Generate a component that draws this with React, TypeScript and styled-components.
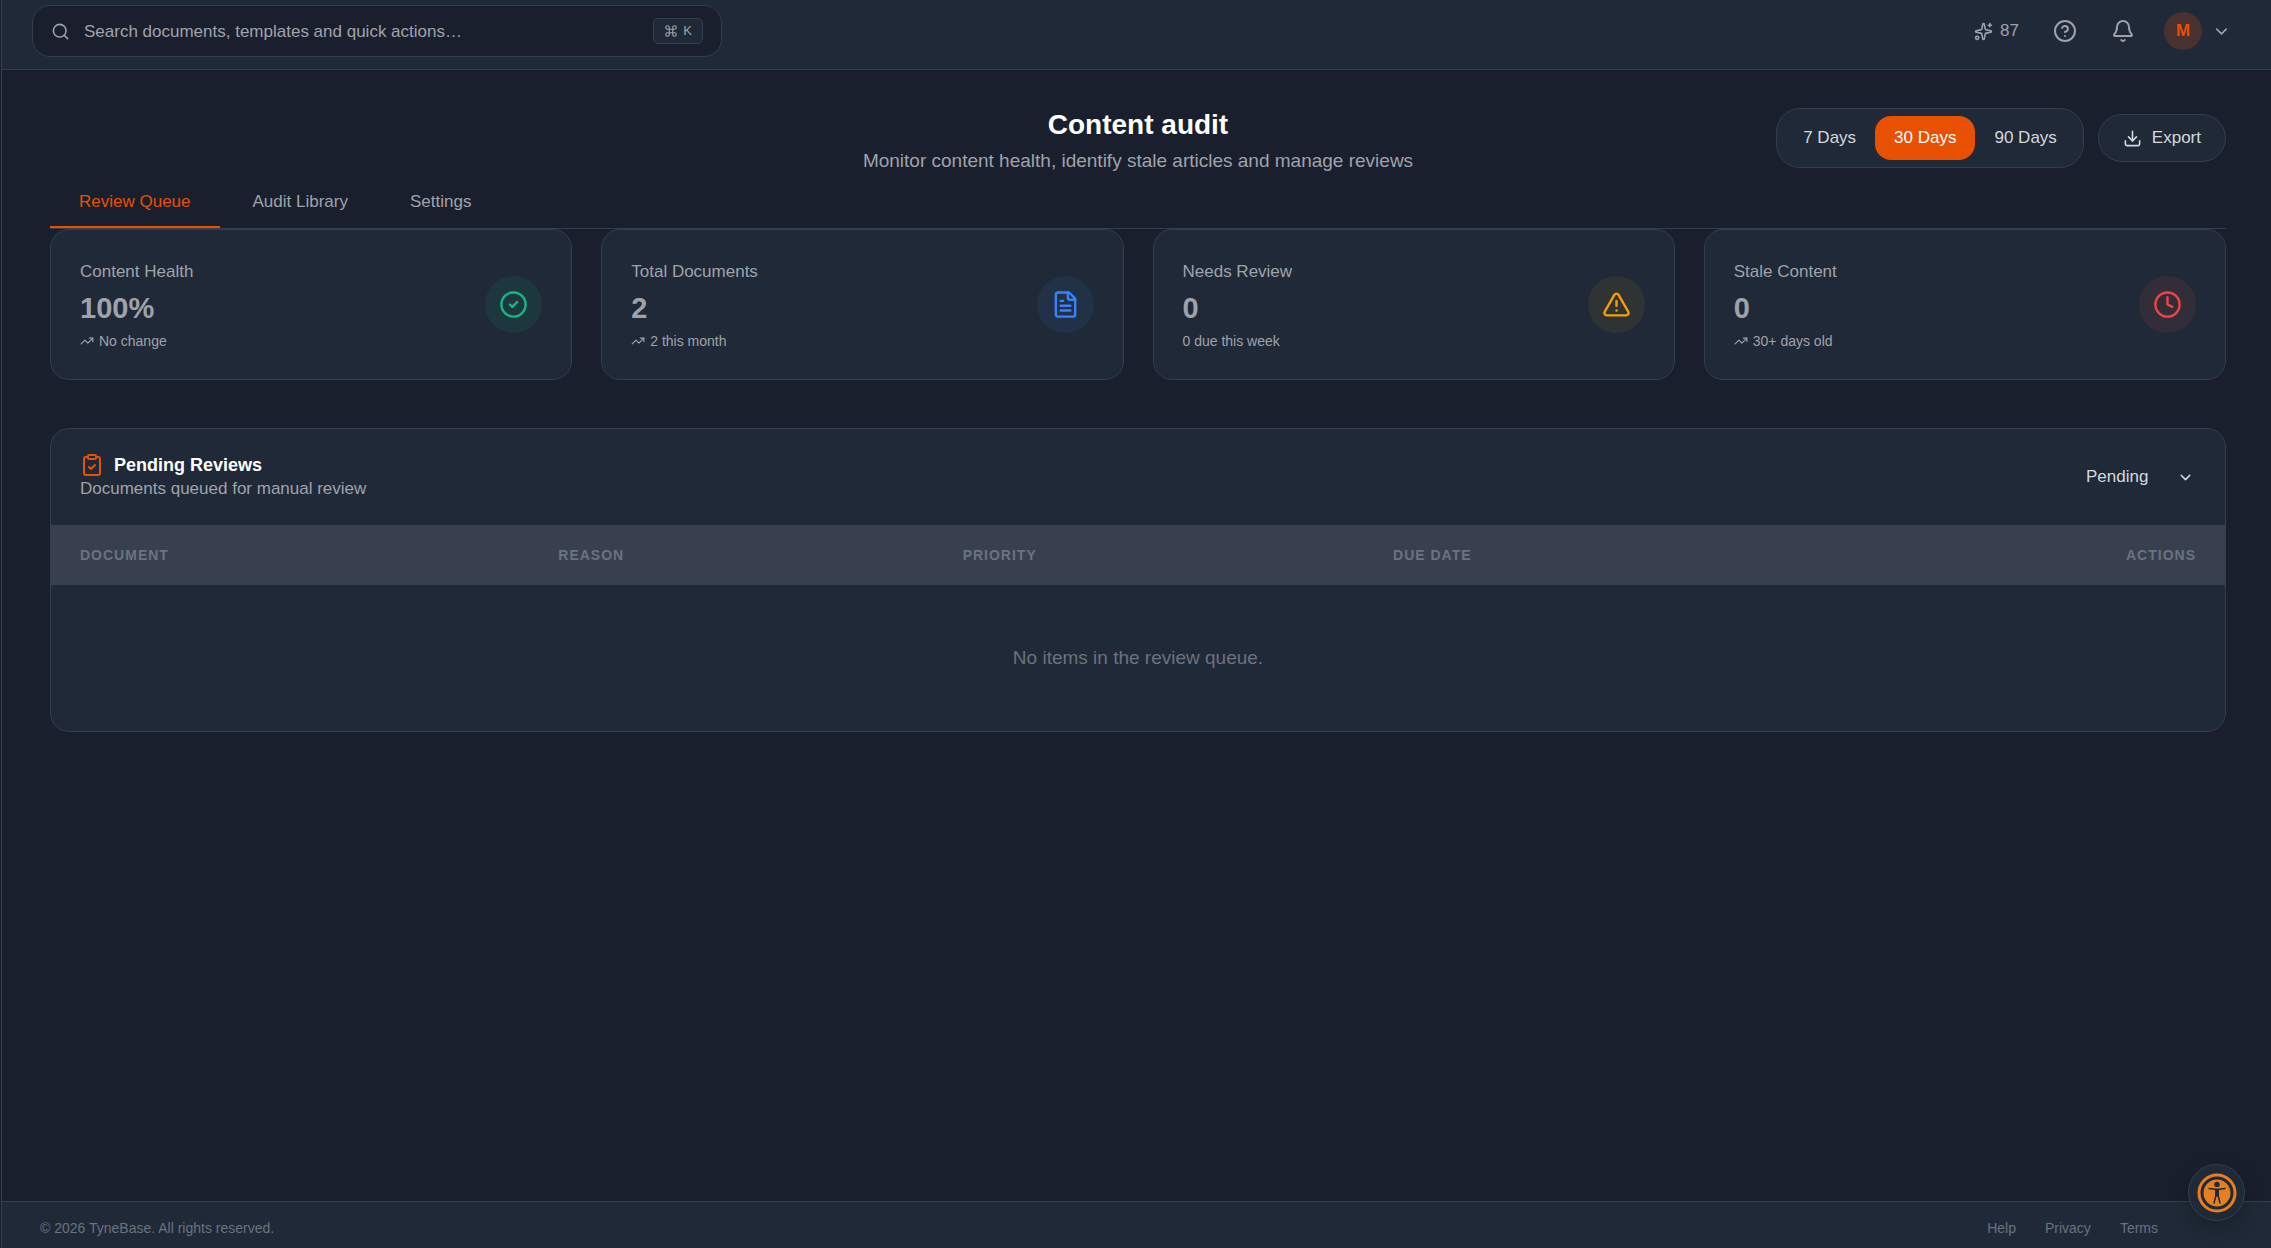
import React, { useState } from "react";
import styled, { createGlobalStyle, css } from "styled-components";
import {
  Bell,
  ChevronDown,
  CircleCheck,
  CircleHelp,
  ClipboardCheck,
  Clock,
  Command,
  Download,
  FileText,
  Search,
  TrendingUp,
  TriangleAlert,
} from "lucide-react";

const c = {
  page: "#1a1f2d",
  surface: "#202937",
  line: "#343e4c",
  head: "#384050",
  text: "#d4d8de",
  soft: "#a0a2ab",
  faint: "#6b7280",
  brand: "#e85002",
};

const GlobalStyle = createGlobalStyle`
  *, *::before, *::after { box-sizing: border-box; }
  body {
    margin: 0;
    background: ${c.page};
    color: ${c.soft};
    font-family: "Liberation Sans", Arial, Helvetica, sans-serif;
    font-size: 17px;
    line-height: 24px;
  }
  button, input, select { font: inherit; color: inherit; }
  button { cursor: pointer; }
  h1, h2, p { margin: 0; }
  svg { flex: none; }
`;

const Shell = styled.div`
  min-height: 100vh;
  display: flex;
  flex-direction: column;
  border-left: 1px solid ${c.line};
  margin-left: 1px;
`;

const TopBar = styled.header`
  display: flex;
  align-items: center;
  justify-content: space-between;
  padding: 5px 40px 12px 30px;
  background: ${c.surface};
  border-bottom: 1px solid ${c.line};
`;

const SearchBox = styled.label`
  display: flex;
  align-items: center;
  gap: 14px;
  width: 690px;
  height: 52px;
  padding: 0 18px;
  border: 1px solid ${c.line};
  border-radius: 18px;
  background: ${c.page};
`;

const SearchInput = styled.input`
  flex: 1;
  min-width: 0;
  padding: 1px 0 0;
  border: 0;
  outline: 0;
  background: transparent;
  &::placeholder { color: ${c.soft}; opacity: 1; }
`;

const Shortcut = styled.kbd`
  display: flex;
  align-items: center;
  gap: 5px;
  height: 26px;
  padding: 0 10px;
  border: 1px solid ${c.line};
  border-radius: 5px;
  background: ${c.surface};
  font-family: inherit;
  font-size: 13px;
`;

const TopActions = styled.div`
  display: flex;
  align-items: center;
  gap: 34px;
`;

const PlainButton = styled.button`
  display: flex;
  align-items: center;
  gap: 7px;
  padding: 0;
  border: 0;
  background: none;
`;

const AccountButton = styled(PlainButton)`
  gap: 10px;
  margin-left: -5px;
`;

const Avatar = styled.span`
  display: grid;
  place-items: center;
  width: 38px;
  height: 38px;
  border-radius: 50%;
  background: #48312f;
  color: ${c.brand};
  font-weight: 700;
`;

const Main = styled.main`
  flex: 1;
  padding: 38px 45px 38px 48px;
`;

const PageHead = styled.div`
  display: grid;
  grid-template-columns: 1fr auto 1fr;
  align-items: start;
`;

const Heading = styled.div`
  grid-column: 2;
  text-align: center;
`;

const Title = styled.h1`
  color: #fff;
  font-size: 28px;
  line-height: 34px;
`;

const Subtitle = styled.p`
  margin-top: 5px;
  font-size: 19px;
  line-height: 27px;
`;

const HeadActions = styled.div`
  display: flex;
  align-items: center;
  justify-content: flex-end;
  gap: 14px;
`;

const RangeGroup = styled.div`
  display: flex;
  padding: 7px;
  border: 1px solid ${c.line};
  border-radius: 24px;
  background: ${c.surface};
`;

const RangeButton = styled.button<{ $on: boolean }>`
  height: 44px;
  padding: 0 19px;
  border: 0;
  border-radius: 16px;
  background: ${(p) => (p.$on ? c.brand : "transparent")};
  color: ${(p) => (p.$on ? "#fff" : c.text)};
`;

const ExportButton = styled.button`
  display: flex;
  align-items: center;
  gap: 10px;
  height: 48px;
  padding: 0 24px;
  border: 1px solid ${c.line};
  border-radius: 24px;
  background: ${c.surface};
  color: ${c.text};
`;

const Tabs = styled.nav`
  display: flex;
  gap: 4px;
  border-bottom: 1px solid ${c.line};
`;

const Tab = styled.button<{ $on: boolean }>`
  height: 54px;
  padding: 4px 29px 0;
  border: 0;
  border-bottom: 2px solid ${(p) => (p.$on ? c.brand : "transparent")};
  background: none;
  color: ${(p) => (p.$on ? c.brand : c.soft)};
`;

const Stats = styled.section`
  display: grid;
  grid-template-columns: repeat(4, 1fr);
  gap: 29px;
`;

const surfaceBox = css`
  border: 1px solid ${c.line};
  border-radius: 19px;
  background: ${c.surface};
`;

const StatCard = styled.article`
  ${surfaceBox}
  display: flex;
  align-items: center;
  justify-content: space-between;
  padding: 28px 29px;
`;

const StatLabel = styled.p`
  padding-top: 2px;
`;

const StatValue = styled.p`
  margin: 4px 0 3px;
  font-size: 29px;
  font-weight: 700;
  line-height: 40px;
`;

const StatNote = styled.p`
  display: flex;
  align-items: center;
  gap: 5px;
  font-size: 14px;
  line-height: 20px;
`;

const StatIcon = styled.span<{ $tone: string; $fill: string }>`
  display: grid;
  place-items: center;
  width: 57px;
  height: 57px;
  border-radius: 50%;
  background: ${(p) => p.$fill};
  color: ${(p) => p.$tone};
`;

const Panel = styled.section`
  ${surfaceBox}
  margin-top: 48px;
  overflow: hidden;
`;

const PanelHead = styled.div`
  display: flex;
  align-items: center;
  justify-content: space-between;
  padding: 24px 29px;
`;

const PanelTitle = styled.h2`
  display: flex;
  align-items: center;
  gap: 10px;
  color: #fff;
  font-size: 18px;
  line-height: 24px;
  svg { color: ${c.brand}; }
`;

const SelectWrap = styled.label`
  display: flex;
  align-items: center;
  padding-right: 2px;
  color: ${c.text};
`;

const Select = styled.select`
  appearance: none;
  width: 114px;
  padding: 0 0 0 19px;
  margin-right: -4px;
  border: 0;
  outline: 0;
  background: ${c.surface};
`;

const Table = styled.table`
  width: 100%;
  table-layout: fixed;
  border-collapse: collapse;
`;

const Th = styled.th<{ $w?: string; $right?: boolean }>`
  width: ${(p) => p.$w ?? "auto"};
  height: 60px;
  padding: 0 29px;
  background: ${c.head};
  color: ${c.faint};
  font-size: 14px;
  letter-spacing: 1px;
  text-align: ${(p) => (p.$right ? "right" : "left")};
  text-transform: uppercase;
`;

const EmptyCell = styled.td`
  height: 146px;
  padding: 0 29px;
  color: ${c.faint};
  font-size: 19px;
  text-align: center;
`;

const Footer = styled.footer`
  display: flex;
  align-items: center;
  justify-content: space-between;
  padding: 16px 113px 10px 38px;
  border-top: 1px solid ${c.line};
  background: ${c.surface};
  color: ${c.faint};
  font-size: 14px;
  line-height: 20px;
`;

const FooterLinks = styled.nav`
  display: flex;
  gap: 29px;
  a { color: inherit; text-decoration: none; }
`;

const AccessButton = styled.button`
  position: fixed;
  right: 26px;
  bottom: 27px;
  display: grid;
  place-items: center;
  width: 57px;
  height: 57px;
  padding: 0;
  border: 1px solid ${c.line};
  border-radius: 50%;
  background: ${c.surface};
  box-shadow: 0 8px 20px rgba(0, 0, 0, 0.2);
`;

const CreditsIcon = () => (
  <svg width="19" height="19" viewBox="0 0 24 24" fill="none" stroke="currentColor" strokeWidth="2" strokeLinecap="round" strokeLinejoin="round" aria-hidden="true">
    <path d="M11.017 2.814a1 1 0 0 1 1.966 0l1.051 5.558a2 2 0 0 0 1.594 1.594l5.558 1.051a1 1 0 0 1 0 1.966l-5.558 1.051a2 2 0 0 0-1.594 1.594l-1.051 5.558a1 1 0 0 1-1.966 0l-1.051-5.558a2 2 0 0 0-1.594-1.594l-5.558-1.051a1 1 0 0 1 0-1.966l5.558-1.051a2 2 0 0 0 1.594-1.594z" />
    <path d="M20 2v4M22 4h-4" />
    <circle cx="4" cy="20" r="2" />
  </svg>
);

const AccessIcon = () => (
  <svg width="40" height="40" viewBox="0 0 40 40" aria-hidden="true">
    <circle cx="20" cy="20" r="18" fill="none" stroke="#e67e22" strokeWidth="3" />
    <circle cx="20" cy="20" r="13.5" fill="#e67e22" />
    <circle cx="20" cy="11.4" r="2.7" fill={c.surface} />
    <path d="M12 15.4l6 .8h4l6-.8M18.8 17v6l-1.8 7M21.2 17v6l1.8 7" fill="none" stroke={c.surface} strokeWidth="1.5" strokeLinecap="round" strokeLinejoin="round" />
    <path d="M18 16h4v7.5h-4z" fill={c.surface} />
  </svg>
);

const stats = [
  { label: "Content Health", value: "100%", note: "No change", trend: true, Icon: CircleCheck, tone: "#10b981", fill: "#1e373e" },
  { label: "Total Documents", value: "2", note: "2 this month", trend: true, Icon: FileText, tone: "#3b82f6", fill: "#213147" },
  { label: "Needs Review", value: "0", note: "0 due this week", trend: false, Icon: TriangleAlert, tone: "#f59e0b", fill: "#303334" },
  { label: "Stale Content", value: "0", note: "30+ days old", trend: true, Icon: Clock, tone: "#ef4444", fill: "#322d38" },
];

const ranges = ["7 Days", "30 Days", "90 Days"];
const tabs = ["Review Queue", "Audit Library", "Settings"];

export default function App() {
  const [range, setRange] = useState("30 Days");
  const [tab, setTab] = useState("Review Queue");

  return (
    <>
      <GlobalStyle />
      <Shell>
        <TopBar>
          <SearchBox>
            <Search size={19} />
            <SearchInput aria-label="Search" placeholder="Search documents, templates and quick actions…" />
            <Shortcut>
              <Command size={14} />K
            </Shortcut>
          </SearchBox>
          <TopActions>
            <PlainButton>
              <CreditsIcon />
              87
            </PlainButton>
            <PlainButton aria-label="Help">
              <CircleHelp size={24} />
            </PlainButton>
            <PlainButton aria-label="Notifications">
              <Bell size={24} />
            </PlainButton>
            <AccountButton aria-label="Account">
              <Avatar>M</Avatar>
              <ChevronDown size={19} />
            </AccountButton>
          </TopActions>
        </TopBar>

        <Main>
          <PageHead>
            <Heading>
              <Title>Content audit</Title>
              <Subtitle>Monitor content health, identify stale articles and manage reviews</Subtitle>
            </Heading>
            <HeadActions>
              <RangeGroup>
                {ranges.map((r) => (
                  <RangeButton key={r} $on={r === range} onClick={() => setRange(r)}>
                    {r}
                  </RangeButton>
                ))}
              </RangeGroup>
              <ExportButton>
                <Download size={19} />
                Export
              </ExportButton>
            </HeadActions>
          </PageHead>

          <Tabs>
            {tabs.map((t) => (
              <Tab key={t} $on={t === tab} onClick={() => setTab(t)}>
                {t}
              </Tab>
            ))}
          </Tabs>

          <Stats>
            {stats.map(({ label, value, note, trend, Icon, tone, fill }) => (
              <StatCard key={label}>
                <div>
                  <StatLabel>{label}</StatLabel>
                  <StatValue>{value}</StatValue>
                  <StatNote>
                    {trend && <TrendingUp size={14} />}
                    {note}
                  </StatNote>
                </div>
                <StatIcon $tone={tone} $fill={fill}>
                  <Icon size={29} />
                </StatIcon>
              </StatCard>
            ))}
          </Stats>

          <Panel>
            <PanelHead>
              <div>
                <PanelTitle>
                  <ClipboardCheck size={24} />
                  Pending Reviews
                </PanelTitle>
                <p>Documents queued for manual review</p>
              </div>
              <SelectWrap>
                <Select aria-label="Review status" defaultValue="Pending">
                  <option>Pending</option>
                </Select>
                <ChevronDown size={17} />
              </SelectWrap>
            </PanelHead>
            <Table>
              <thead>
                <tr>
                  <Th $w="22%">Document</Th>
                  <Th $w="18.6%">Reason</Th>
                  <Th $w="19.8%">Priority</Th>
                  <Th $w="20%">Due Date</Th>
                  <Th $right>Actions</Th>
                </tr>
              </thead>
              <tbody>
                <tr>
                  <EmptyCell colSpan={5}>No items in the review queue.</EmptyCell>
                </tr>
              </tbody>
            </Table>
          </Panel>
        </Main>

        <Footer>
          <span>© 2026 TyneBase. All rights reserved.</span>
          <FooterLinks>
            <a href="#help">Help</a>
            <a href="#privacy">Privacy</a>
            <a href="#terms">Terms</a>
          </FooterLinks>
        </Footer>
      </Shell>
      <AccessButton aria-label="Accessibility options">
        <AccessIcon />
      </AccessButton>
    </>
  );
}
